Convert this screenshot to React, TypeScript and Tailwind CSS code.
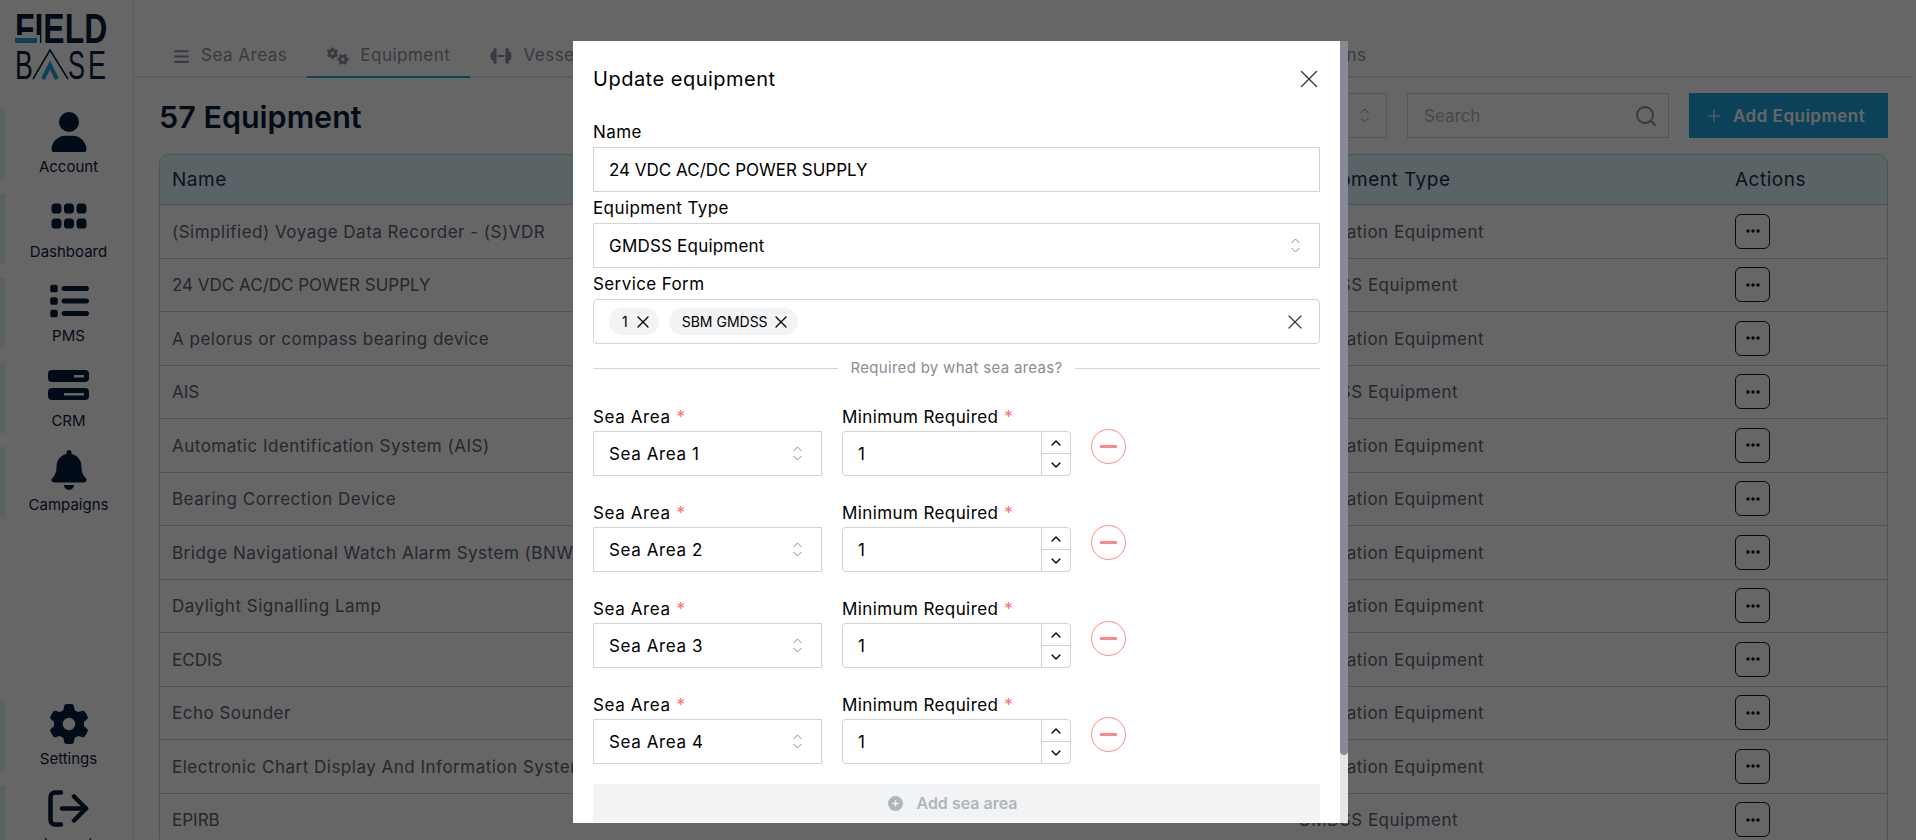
import { FaUser, FaGrip, FaList, FaBell, FaGear, FaGears, FaBars, FaDumbbell, FaEllipsis, FaCirclePlus } from "react-icons/fa6";
import { X, ChevronUp, ChevronDown, Plus, Search } from "lucide-react";

const rows = [
  ["(Simplified) Voyage Data Recorder - (S)VDR", "Navigation Equipment"],
  ["24 VDC AC/DC POWER SUPPLY", "GMDSS Equipment"],
  ["A pelorus or compass bearing device", "Navigation Equipment"],
  ["AIS", "GMDSS Equipment"],
  ["Automatic Identification System (AIS)", "Navigation Equipment"],
  ["Bearing Correction Device", "Navigation Equipment"],
  ["Bridge Navigational Watch Alarm System (BNWAS)", "Navigation Equipment"],
  ["Daylight Signalling Lamp", "Navigation Equipment"],
  ["ECDIS", "Navigation Equipment"],
  ["Echo Sounder", "Navigation Equipment"],
  ["Electronic Chart Display And Information System (ECDIS)", "Navigation Equipment"],
  ["EPIRB", "GMDSS Equipment"],
];

function SelectorIcon() {
  return (
    <svg viewBox="0 0 9 15" className="w-[9px] h-[15px] text-[#868e96]" fill="none" stroke="currentColor" strokeWidth="1">
      <path d="M.5 5 4.500 1 8.500 5" />
      <path d="M.5 10 4.500 14 8.500 10" />
    </svg>
  );
}

function LogoutIcon() {
  return (
    <svg viewBox="0 0 41 37" className="w-[41px] h-[37px]" fill="none" stroke="currentColor" strokeWidth="4.5" strokeLinecap="round" strokeLinejoin="round">
      <path d="M13 2.500H7a4.500 4.500 0 0 0-4.500 4.500v23A4.500 4.500 0 0 0 7 34.500h6" />
      <path d="M14 18.500h24" />
      <path d="M26 6.500l12 12-12 12" />
    </svg>
  );
}

function ServerIcon() {
  return (
    <svg viewBox="0 0 41 30" className="w-[41px] h-[30px]" fill="currentColor">
      <path fillRule="evenodd" d="M4 0h33a4 4 0 0 1 4 4v4a4 4 0 0 1-4 4H4a4 4 0 0 1-4-4V4a4 4 0 0 1 4-4Zm22 5v2.500h10V5Z" />
      <path fillRule="evenodd" d="M4 18h33a4 4 0 0 1 4 4v4a4 4 0 0 1-4 4H4a4 4 0 0 1-4-4v-4a4 4 0 0 1 4-4Zm12 5v2.500h20V23Z" />
    </svg>
  );
}

function Logo() {
  return (
    <svg viewBox="0 0 93 68" className="w-[93px] h-[68px]">
      <g transform="scale(0.76 1)">
        <text x="0" y="30" fontFamily="Liberation Sans" fontWeight="700" fontSize="42" fill="#061c3d">FIELD</text>
      </g>
      <rect x="0" y="22" width="25" height="9" fill="#fff" />
      <rect x="0" y="25" width="22" height="5" fill="#1ca6de" />
      <g transform="scale(0.65 1)">
        <text x="0" y="66" fontFamily="Liberation Sans" fontSize="41" fill="#061c3d">B</text>
      </g>
      <path d="M18 66 35 37 53 66" fill="none" stroke="#061c3d" strokeWidth="1.500" />
      <path d="M28 66 35 52 42 66" fill="none" stroke="#1ca6de" strokeWidth="4" />
      <g transform="translate(53 0) scale(0.62 1)">
        <text x="0" y="66" fontFamily="Liberation Sans" fontSize="41" fill="#061c3d">S</text>
      </g>
      <g transform="translate(73 0) scale(0.66 1)">
        <text x="0" y="66" fontFamily="Liberation Sans" fontSize="41" fill="#061c3d">E</text>
      </g>
    </svg>
  );
}

function SideItem({ icon, label }: { icon: React.ReactNode; label: string }) {
  return (
    <div className="relative h-[70px] shrink-0 pl-[4px] flex flex-col items-center text-[#061c3d]">
      <div className="absolute left-0 top-0 bottom-0 w-[5px] bg-[#dff3f9]" />
      <div className="h-[45px] flex items-center justify-center">{icon}</div>
      <div className="text-[15px] leading-[20px] mt-[3px] text-[#0b2040]">{label}</div>
    </div>
  );
}

function Tab({ icon, label, active, className }: { icon: React.ReactNode; label: string; active?: boolean; className?: string }) {
  return (
    <div className={`h-[47px] px-5 pt-[5px] flex items-center gap-[11px] border-b-2 -mb-[2px] text-[17px] tracking-[0.5px] text-[#8a93a3] ${active ? "border-[#1ca6de]" : "border-transparent"} ${className ?? ""}`}>
      {icon}
      <span>{label}</span>
    </div>
  );
}

function SeaAreaRow({ n }: { n: number }) {
  return (
    <div className="flex gap-5 h-[96px] pt-[19px] tracking-[0.6px]">
      <div className="w-[229px]">
        <div className="h-[29px] pt-[2px] flex items-center gap-[6px]">
          Sea Area <span className="text-[#ff6b6b]">*</span>
        </div>
        <div className="h-[45px] border border-[#ced4da] flex items-center justify-between pl-[15px] pr-[19px]">
          <span className="pt-[2px]">Sea Area {n}</span>
          <SelectorIcon />
        </div>
      </div>
      <div className="w-[229px]">
        <div className="h-[29px] pt-[2px] flex items-center gap-[6px] tracking-[0.4px]">
          Minimum Required <span className="text-[#ff6b6b]">*</span>
        </div>
        <div className="h-[45px] border border-[#ced4da] rounded flex items-center">
          <span className="flex-1 pl-[15px] pt-[2px]">1</span>
          <div className="w-[29px] h-full border-l border-[#ced4da] flex flex-col">
            <div className="flex-1 flex items-center justify-center border-b-[1.5px] border-[#ced4da]">
              <ChevronUp size={16} />
            </div>
            <div className="flex-1 flex items-center justify-center">
              <ChevronDown size={16} />
            </div>
          </div>
        </div>
      </div>
      <div className="mt-[27px] w-[35px] h-[35px] rounded-full border border-[#ff8787] flex items-center justify-center">
        <div className="w-[17px] h-[2.500px] bg-[#ff8787]" />
      </div>
    </div>
  );
}

export default function App() {
  return (
    <div className="relative h-[840px] overflow-hidden bg-white flex font-['Inter',sans-serif] text-[17px] text-[#000]">
      {/* Sidebar */}
      <aside className="w-[134px] shrink-0 border-r border-[#e5e7eb] flex flex-col">
        <div className="h-[109px] shrink-0 pl-[15px] pt-[13px]">
          <Logo />
        </div>
        <div className="flex flex-col gap-[14.500px] shrink-0">
          <SideItem icon={<FaUser size={40} />} label="Account" />
          <SideItem icon={<FaGrip size={40} />} label="Dashboard" />
          <SideItem icon={<FaList size={40} />} label="PMS" />
          <SideItem icon={<ServerIcon />} label="CRM" />
          <SideItem icon={<FaBell size={40} />} label="Campaigns" />
        </div>
        <div className="flex flex-col gap-[14.500px] mt-[184px] shrink-0">
          <SideItem icon={<FaGear size={40} />} label="Settings" />
          <SideItem icon={<LogoutIcon />} label="Logout" />
        </div>
      </aside>

      {/* Main */}
      <main className="flex-1 min-w-0">
        <div className="h-[78px] pt-[31px] pl-[19px] flex border-b-2 border-[#e5e7eb] mr-[3px]">
          <Tab icon={<FaBars size={17} />} label="Sea Areas" />
          <Tab icon={<FaGears size={22} />} label="Equipment" active />
          <Tab icon={<FaDumbbell size={22} />} label="Vessel Types" />
          <Tab icon={<FaBars size={17} />} label="Service Forms" />
          <Tab icon={<FaBars size={17} />} label="Inspections" />
          <Tab icon={<FaBars size={17} />} label="Regulations" />
          <Tab icon={<FaBars size={17} />} label="Certifications" className="ml-[25px]" />
        </div>

        <div className="pl-[25px] pr-[28px]">
          <div className="h-[76px] flex items-start justify-between pt-[15px]">
            <h1 className="text-[30.500px] leading-[48px] font-semibold text-[#061c3d]">57 Equipment</h1>
            <div className="flex gap-5">
              <div className="w-[200px] h-[45px] border border-[#ced4da] flex items-center justify-end pr-[17px]">
                <SelectorIcon />
              </div>
              <div className="w-[262px] h-[45px] border border-[#ced4da] flex items-center justify-between pl-[16px] pr-[10px] text-[#adb5bd]">
                <span className="pt-[2px]">Search</span>
                <Search size={24} strokeWidth={1.800} className="text-[#868e96]" />
              </div>
              <div className="w-[199px] h-[45px] bg-[#1ca6de] text-white font-semibold tracking-[0.5px] flex items-center pl-[15px] gap-[9px]">
                <Plus size={20} strokeWidth={1.500} className="opacity-80" />
                <span className="pt-[2px]">Add Equipment</span>
              </div>
            </div>
          </div>

          <div className="border border-[#c5ccd8] rounded-[10px] overflow-hidden">
            <div className="h-[50px] pt-[2px] bg-[#e1f7fd] flex items-center text-[19px] tracking-[0.5px] text-[#1f2f4f] border-b border-[#c5ccd8]">
              <div className="w-[1138px] pl-[12px]">Name</div>
              <div className="w-[437px]">Equipment Type</div>
              <div>Actions</div>
            </div>
            {rows.map(([name, type]) => (
              <div key={name} className="h-[53.500px] flex items-center text-[#5a6478] tracking-[0.5px] border-b border-[#c5ccd8]">
                <div className={`w-[1138px] pl-[12px] pt-[2px] ${name === name.toUpperCase() ? "tracking-normal" : ""}`}>{name}</div>
                <div className="w-[437px] pt-[2px]">{type}</div>
                <div className="w-[35px] h-[35px] border border-[#111827] rounded-md flex items-center justify-center text-[#111827]">
                  <FaEllipsis size={16} />
                </div>
              </div>
            ))}
          </div>
        </div>
      </main>

      {/* Overlay + modal */}
      <div className="absolute inset-0 bg-black/60" />
      <div className="absolute left-[573px] top-[41px] w-[775px] h-[782px] bg-white flex overflow-hidden">
        <div className="flex-1 min-w-0 pl-[20px] pr-[20px] overflow-hidden">
          <div className="h-[75px] flex items-center justify-between">
            <span className="text-[20px] tracking-[0.5px]">Update equipment</span>
            <X size={30} strokeWidth={1.100} className="text-[#343a40] -mr-[4px]" />
          </div>
          <div className="h-[31px] pt-[2px] flex items-center tracking-[0.4px]">Name</div>
          <div className="h-[45px] pt-[2px] border border-[#ced4da] flex items-center pl-[15px]">24 VDC AC/DC POWER SUPPLY</div>
          <div className="h-[31px] pt-[2px] flex items-center tracking-[0.4px]">Equipment Type</div>
          <div className="h-[45px] border border-[#ced4da] flex items-center justify-between pl-[15px] pr-[19px] tracking-[0.2px]">
            <span className="pt-[2px]">GMDSS Equipment</span>
            <SelectorIcon />
          </div>
          <div className="h-[31px] pt-[2px] flex items-center tracking-[0.4px]">Service Form</div>
          <div className="h-[45px] border border-[#ced4da] rounded flex items-center pl-[15px] pr-[12px] gap-[10px] text-[14px]">
            <div className="h-[27px] pl-[13px] pr-[6px] rounded-full bg-[#f1f3f5] flex items-center gap-[5px]">
              <span>1</span>
              <X size={20} strokeWidth={1.500} />
            </div>
            <div className="h-[27px] pl-[13px] pr-[7px] rounded-full bg-[#f1f3f5] flex items-center gap-[3px]">
              <span>SBM GMDSS</span>
              <X size={20} strokeWidth={1.500} />
            </div>
            <X size={24} strokeWidth={1.200} className="ml-auto text-[#343a40]" />
          </div>
          <div className="flex items-center gap-[13px] mt-[14px] mb-[5px] h-[20px] text-[15px] tracking-[0.3px] text-[#868e96]">
            <div className="flex-1 border-t border-[#ced4da]" />
            <span>Required by what sea areas?</span>
            <div className="flex-1 border-t border-[#ced4da]" />
          </div>
          <SeaAreaRow n={1} />
          <SeaAreaRow n={2} />
          <SeaAreaRow n={3} />
          <SeaAreaRow n={4} />
          <div className="mt-[17px] h-[38px] bg-[#f1f3f5] text-[#adb5bd] text-[16px] font-semibold flex items-center justify-center gap-[13px] pr-[7px]">
            <FaCirclePlus size={15} />
            <span>Add sea area</span>
          </div>
        </div>
        <div className="w-2 bg-[#e5e5e5] shrink-0">
          <div className="h-[714px] bg-[#868a96] rounded-b" />
        </div>
      </div>
    </div>
  );
}
